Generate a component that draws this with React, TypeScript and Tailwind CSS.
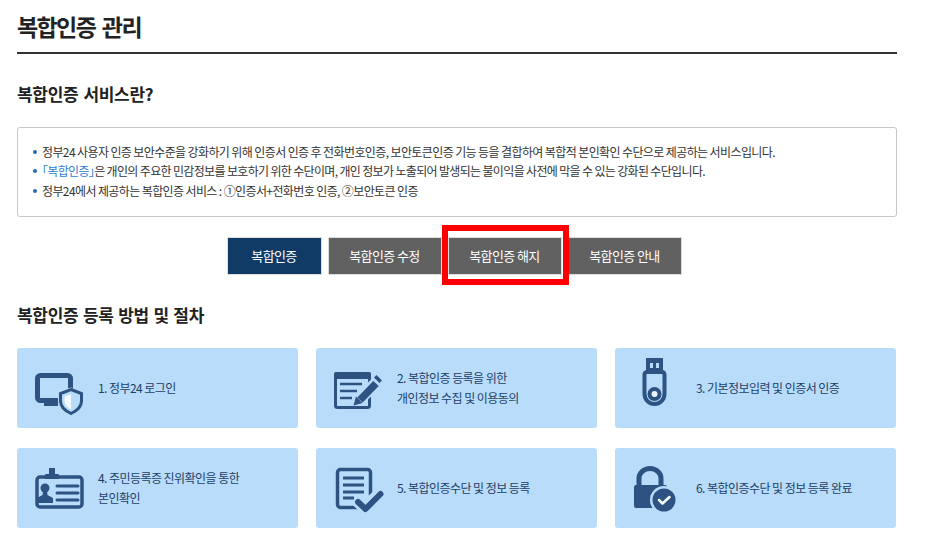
import React from "react";

const C = "#2c5382";
const BG = "#b9dcfa";

const Icon1 = () => (
  <svg width="68" height="80" viewBox="0 0 68 80" className="shrink-0">
    <path d="M42 52.5H23.5a3 3 0 0 1-3-3V30.500a3 3 0 0 1 3-3h27a3 3 0 0 1 3 3v10" fill="none" stroke={C} strokeWidth="5" />
    <rect x="31" y="52" width="7" height="5" fill={C} />
    <rect x="27" y="55" width="14" height="3" fill={C} />
    <path d="M54 39.5L67 44.5V53C67 60 60 65 54 68C48 65 41 60 41 53V44.5Z" fill={BG} />
    <path d="M54 41.5L64.5 45.5V53C64.5 59 59.5 63 54 65.5C48.5 63 43.5 59 43.5 53V45.5Z" fill="none" stroke={C} strokeWidth="3" />
    <path d="M54 46L47.5 48.5V53C47.5 56.5 50.5 59.5 54 61.5Z" fill="#f1f8fe" />
  </svg>
);

const Icon2 = () => (
  <svg width="68" height="80" viewBox="0 0 68 80" className="shrink-0">
    <rect x="19.5" y="25.5" width="34" height="34" rx="2" fill="none" stroke={C} strokeWidth="3" />
    <rect x="18" y="24" width="37" height="7" rx="2" fill={C} />
    <path d="M24 36H46M24 43H41M24 50H36" stroke={C} strokeWidth="2.5" />
    <path d="M41 54L63 32" stroke={BG} strokeWidth="12" />
    <path d="M44 52L60 35.5" stroke={C} strokeWidth="7.5" />
    <path d="M60.5 27L66 32.5L63.5 35L58 29.5Z" fill={C} />
    <path d="M37.5 57.5L40 48.5L46.5 55Z" fill={C} />
  </svg>
);

const Icon3 = () => (
  <svg width="68" height="80" viewBox="0 0 68 80" className="shrink-0">
    <path d="M31 24V10H48V24Z" fill={C} />
    <rect x="35" y="15" width="3" height="5" fill={BG} />
    <rect x="41" y="15" width="3" height="5" fill={BG} />
    <path d="M32 24H47a2.5 2.5 0 0 1 2.5 2.5V46a10 10 0 0 1-20 0V26.5A2.5 2.5 0 0 1 32 24Z" fill="none" stroke={C} strokeWidth="4" />
    <circle cx="39.500" cy="46" r="7" fill={C} />
    <circle cx="39.500" cy="46" r="3" fill="#eef6fd" />
  </svg>
);

const Icon4 = () => (
  <svg width="68" height="80" viewBox="0 0 68 80" className="shrink-0">
    <rect x="20" y="29" width="45" height="30" rx="3" fill="none" stroke={C} strokeWidth="3.500" />
    <rect x="32" y="20" width="6" height="8" fill={C} />
    <rect x="28" y="26" width="14" height="5" rx="1" fill={C} />
    <circle cx="28" cy="40" r="4.500" fill={C} />
    <path d="M26 43H30L30.500 47L36 50V55H20V50L25.500 47Z" fill={C} />
    <path d="M40 38H61M40 45H61M40 52H61" stroke={C} strokeWidth="3" strokeLinecap="round" />
  </svg>
);

const Icon5 = () => (
  <svg width="68" height="80" viewBox="0 0 68 80" className="shrink-0">
    <rect x="21.500" y="21.500" width="33" height="38" rx="3" fill="none" stroke={C} strokeWidth="3.500" />
    <path d="M27 30H48M27 37H48M27 44H48M27 50H38" stroke={C} strokeWidth="3" />
    <path d="M41 52L49 60L66 44" fill="none" stroke={BG} strokeWidth="13" />
    <path d="M42 54L49.500 61L64.500 46" fill="none" stroke={C} strokeWidth="6" strokeLinecap="round" strokeLinejoin="round" />
  </svg>
);

const Icon6 = () => (
  <svg width="68" height="80" viewBox="0 0 68 80" className="shrink-0">
    <path d="M24 38V30.500a11 10 0 0 1 22 0V38" fill="none" stroke={C} strokeWidth="5" />
    <rect x="19" y="37" width="33" height="23" rx="2" fill={C} />
    <circle cx="49" cy="52" r="14" fill={BG} />
    <circle cx="49" cy="52" r="11.500" fill={C} />
    <path d="M44 52L47.500 55.500L54.500 49" fill="none" stroke="#ffffff" strokeWidth="2.500" strokeLinecap="round" strokeLinejoin="round" />
  </svg>
);

const steps: { icon: React.ReactNode; lines: string[] }[] = [
  { icon: <Icon1 />, lines: ["1. 정부24 로그인"] },
  { icon: <Icon2 />, lines: ["2. 복합인증 등록을 위한", "개인정보 수집 및 이용동의"] },
  { icon: <Icon3 />, lines: ["3. 기본정보입력 및 인증서 인증"] },
  { icon: <Icon4 />, lines: ["4. 주민등록증 진위확인을 통한", "본인확인"] },
  { icon: <Icon5 />, lines: ["5. 복합인증수단 및 정보 등록"] },
  { icon: <Icon6 />, lines: ["6. 복합인증수단 및 정보 등록 완료"] },
];

const Bullet = ({ children }: { children: React.ReactNode }) => (
  <li className="flex items-center h-[19.5px]">
    <span className="w-1 h-1 rounded-full bg-[#2b6cb0] mr-[5px] shrink-0" />
    <span>{children}</span>
  </li>
);

export default function App() {
  return (
    <div
      className="w-[932px] h-[553px] overflow-hidden bg-white pl-[17px] text-[#333]"
      style={{ fontFamily: '"Noto Sans CJK KR", "Noto Sans", sans-serif' }}
    >
      <div className="w-[880px]">
        <h1 className="h-[54px] pt-[9px] border-b-2 border-[#333] text-[23px] leading-[34px] font-bold tracking-[-1.6px] [word-spacing:3px] text-[#222]">
          복합인증 관리
        </h1>
        <h2 className="mt-[27px] text-[17px] leading-[26px] font-bold tracking-[-0.3px] [word-spacing:1.5px] text-[#222]">
          복합인증 서비스란?
        </h2>
        <ul className="mt-[20px] h-[90px] border border-[#c8c8c8] rounded-[3px] pl-[15px] pt-[14px] text-[12px] tracking-[-0.61px] text-[#333]">
          <Bullet>정부24 사용자 인증 보안수준을 강화하기 위해 인증서 인증 후 전화번호인증, 보안토큰인증 기능 등을 결합하여 복합적 본인확인 수단으로 제공하는 서비스입니다.</Bullet>
          <Bullet>
            <span className="tracking-[-0.66px]">
              <span className="text-[#2b7fd4]">｢복합인증｣</span>은 개인의 주요한 민감정보를 보호하기 위한 수단이며, 개인 정보가 노출되어 발생되는 불이익을 사전에 막을 수 있는 강화된 수단입니다.
            </span>
          </Bullet>
          <Bullet>정부24에서 제공하는 복합인증 서비스 : ①인증서+전화번호 인증, ②보안토큰 인증</Bullet>
        </ul>
        <div className="mt-5 flex justify-center gap-[6px] pr-[6px] text-white text-[13px] tracking-[-0.6px]">
          <div className="w-[95px] h-[38px] flex items-center justify-center bg-[#0f3b66] border border-[#dddddd]">복합인증</div>
          <div className="w-[114px] h-[38px] flex items-center justify-center bg-[#616161] border border-[#dddddd]">복합인증 수정</div>
          <div className="relative w-[114px] h-[38px] flex items-center justify-center bg-[#616161] border border-[#dddddd]">
            복합인증 해지
            <div className="absolute left-[-7px] right-[-8px] top-[-13px] bottom-[-11px] border-[6px] border-[#ff0000]" />
          </div>
          <div className="w-[114px] h-[38px] flex items-center justify-center bg-[#616161] border border-[#dddddd]">복합인증 안내</div>
        </div>
        <h2 className="mt-[27px] text-[17px] leading-[26px] font-bold tracking-[-0.3px] [word-spacing:1px] text-[#222]">
          복합인증 등록 방법 및 절차
        </h2>
        <div className="mt-[20px] grid grid-cols-[281px_281px_281px] gap-x-[18px] gap-y-[20px]">
          {steps.map((s) => (
            <div key={s.lines[0]} className="h-[80px] bg-[#b9dcfa] rounded-[3px] flex items-center gap-[13px] text-[12px] leading-[20px] tracking-[-0.55px] text-[#1d3f66]">
              {s.icon}
              <div>
                {s.lines.map((l) => (
                  <div key={l}>{l}</div>
                ))}
              </div>
            </div>
          ))}
        </div>
      </div>
    </div>
  );
}
